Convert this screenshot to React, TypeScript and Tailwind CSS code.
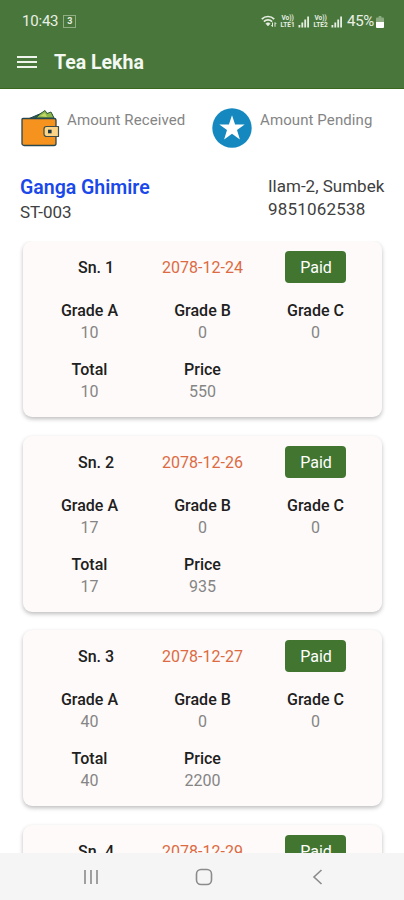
import React from 'react';

interface Entry {
  sn: number;
  date: string;
  gradeA: number;
  gradeB: number;
  gradeC: number;
  total: number;
  price: number;
}

const entries: Entry[] = [
  { sn: 1, date: '2078-12-24', gradeA: 10, gradeB: 0, gradeC: 0, total: 10, price: 550 },
  { sn: 2, date: '2078-12-26', gradeA: 17, gradeB: 0, gradeC: 0, total: 17, price: 935 },
  { sn: 3, date: '2078-12-27', gradeA: 40, gradeB: 0, gradeC: 0, total: 40, price: 2200 },
];

const WifiIcon = () => (
  <svg width="16" height="13" viewBox="0 0 16 13" fill="none" stroke="#e6eee2">
    <path d="M0.800 4.200C4.200.6 9.800.6 13.200 4.200" strokeWidth="1.700" />
    <path d="M2.900 6.600c2.300-2.300 5.900-2.300 8.200 0" strokeWidth="1.700" />
    <path d="M4.800 8.600c1.300-1.200 3.100-1.200 4.400 0L7 11z" fill="#e6eee2" strokeWidth="0.500" />
    <path d="M11.500 7.500v4M10.300 10.300l1.200 1.400M14 11.700v-4M15.200 8.900L14 7.500" strokeWidth="1" />
  </svg>
);

const SignalIcon = () => (
  <svg width="12" height="12" viewBox="0 0 12 12" fill="#e6eee2">
    <rect x="0.500" y="9" width="1.800" height="2.500" />
    <rect x="3.400" y="6.500" width="1.800" height="5" />
    <rect x="6.300" y="3.500" width="1.800" height="8" />
    <rect x="9.200" y="0.500" width="1.800" height="11" />
  </svg>
);

const LteLabel = ({ line }: { line: string }) => (
  <div className="flex w-[15px] flex-col items-center text-[6.5px] leading-[7px] font-bold text-[#e6eee2]">
    <span>Vo))</span>
    <span>{line}</span>
  </div>
);

const WalletIcon = () => (
  <svg width="40" height="40" viewBox="0 0 40 40" strokeLinejoin="round">
    <path d="M8 11l14-6 10 1 2 6-22 2z" fill="#2f5a4c" stroke="#23444a" strokeWidth="1" />
    <path d="M16 10l4-4 5-3.500 2 3 4-1.500 3 6z" fill="#8fb84a" stroke="#2f5a3c" strokeWidth="1" />
    <path d="M20 8l5-3 2 4z" fill="#c5d96a" />
    <path d="M3 10.500h31a2 2 0 0 1 2 2v23a2 2 0 0 1-2 2H4a2 2 0 0 1-2-2v-24a1 1 0 0 1 1-1z" fill="#f6921e" stroke="#28474f" strokeWidth="1.300" />
    <path d="M2.500 10.500h33" stroke="#28474f" strokeWidth="1.200" />
    <path d="M26.500 18.500h12v10h-12a2.500 2.500 0 0 1-2.500-2.500v-5a2.500 2.500 0 0 1 2.500-2.500z" fill="#fbd487" stroke="#3b4c4a" strokeWidth="1.200" />
    <rect x="28" y="21.700" width="3.600" height="3.600" fill="#1d3742" />
  </svg>
);

const StarBadge = () => (
  <svg width="40" height="40" viewBox="0 0 40 40">
    <circle cx="20" cy="20" r="19.700" fill="#1488bf" />
    <path d="M20 7.300l3.100 9.100h9.600l-7.700 5.700 2.900 9.300-7.900-5.600-7.900 5.600 2.900-9.300-7.700-5.700h9.600z" fill="#fff" />
  </svg>
);

const Cell = ({ label, value }: { label: string; value: number }) => (
  <div className="flex flex-col items-center leading-[22px]">
    <span className="font-medium text-[#202020]">{label}</span>
    <span className="text-[#858585]">{value}</span>
  </div>
);

const CardTop = ({ sn, date }: { sn: number; date: string }) => (
  <div className="grid grid-cols-3 items-center justify-items-center text-center">
    <span className="pt-[2px] pl-[13px] font-medium text-[#202020]">Sn. {sn}</span>
    <span className="pt-[2px] text-[#dc6a42]">{date}</span>
    <button className="h-[32px] w-[61px] rounded-[4px] bg-[#427530] pt-[2px] pl-[1px] text-[16px] text-white">Paid</button>
  </div>
);

const cardClass = 'shrink-0 bg-[#fefaf9] px-[10px] pt-[10px] shadow-[0_2px_4px_rgba(0,0,0,0.26)]';

const EntryCard = ({ entry }: { entry: Entry }) => (
  <div className={`${cardClass} h-[176px] rounded-[9px]`}>
    <CardTop sn={entry.sn} date={entry.date} />
    <div className="mt-[17px] grid grid-cols-3 gap-y-[15px]">
      <Cell label="Grade A" value={entry.gradeA} />
      <Cell label="Grade B" value={entry.gradeB} />
      <Cell label="Grade C" value={entry.gradeC} />
      <Cell label="Total" value={entry.total} />
      <Cell label="Price" value={entry.price} />
    </div>
  </div>
);

const App: React.FC = () => {
  return (
    <div className="flex h-[900px] w-[404px] flex-col overflow-hidden bg-white font-['Roboto',sans-serif] text-[16px]">
      <header className="h-[89px] shrink-0 border-b border-[#3a681f] bg-[#49773b]">
        <div className="flex h-[43px] items-center pl-[22px] pr-[20px] text-[15px] text-[#e9f0e5]">
          <span className="tracking-[-0.2px]">10:43</span>
          <span className="ml-[5px] flex h-[13px] w-[13px] items-center justify-center border border-[#8fae84] text-[9px] font-bold">3</span>
          <div className="ml-auto flex items-center">
            <WifiIcon />
            <div className="ml-[3px] flex items-center gap-[3px]">
              <LteLabel line="LTE1" />
              <SignalIcon />
              <LteLabel line="LTE2" />
              <SignalIcon />
            </div>
            <span className="ml-[4px] tracking-[-0.3px]">45%</span>
            <svg className="ml-[2px]" width="8" height="12" viewBox="0 0 9 12" preserveAspectRatio="none">
              <path d="M3 0h3v1.500h2a1 1 0 0 1 1 1V6H0V2.500a1 1 0 0 1 1-1h2z" fill="#8cab80" />
              <path d="M0 6h9v5a1 1 0 0 1-1 1H1a1 1 0 0 1-1-1z" fill="#fff" />
            </svg>
          </div>
        </div>
        <div className="flex h-[38px] items-center pl-[17px]">
          <div className="flex w-[20px] flex-col gap-[3px]">
            <span className="h-[2px] bg-[#eef4eb]" />
            <span className="h-[2px] bg-[#eef4eb]" />
            <span className="h-[2px] bg-[#eef4eb]" />
          </div>
          <h1 className="ml-[17px] pt-[2px] text-[19.5px] font-bold text-[#f4f8f2]">Tea Lekha</h1>
        </div>
      </header>

      <section className="flex h-[60px] shrink-0 pt-[19px] pl-[20px]">
        <div className="flex w-[192px]">
          <WalletIcon />
          <span className="ml-[7px] text-[15px] leading-[24px] tracking-[0.1px] text-[#858585]">Amount Received</span>
        </div>
        <div className="flex">
          <StarBadge />
          <span className="ml-[8px] text-[15px] leading-[24px] tracking-[0.1px] text-[#858585]">Amount Pending</span>
        </div>
      </section>

      <section className="mt-[26px] flex h-[66px] shrink-0 justify-between pl-[20px] pr-[19px]">
        <div>
          <p className="text-[19.5px] leading-[26px] font-semibold text-[#1a48ea]">Ganga Ghimire</p>
          <p className="text-[17px] leading-[23px] text-[#404040]">ST-003</p>
        </div>
        <div className="w-[117px] text-[17px] leading-[23px] whitespace-nowrap text-[#404040]">
          <p>Ilam-2, Sumbek</p>
          <p className="tracking-[0.2px]">9851062538</p>
        </div>
      </section>

      <main className="flex min-h-0 flex-1 flex-col gap-[18.6px] overflow-hidden pr-[22px] pl-[23px]">
        {entries.map((entry) => (
          <EntryCard key={entry.sn} entry={entry} />
        ))}
        <div className={`${cardClass} h-[60px] rounded-t-[9px]`}>
          <CardTop sn={4} date="2078-12-29" />
        </div>
      </main>

      <nav className="z-10 flex h-[47px] shrink-0 items-center bg-[#f5f5f5] text-[#8b8b8b]">
        <svg className="ml-[83px]" width="16" height="16" viewBox="0 0 16 16" fill="none" stroke="currentColor" strokeWidth="1.600">
          <path d="M2 1v14M8 1v14M14 1v14" />
        </svg>
        <svg className="ml-[96px]" width="18" height="18" viewBox="0 0 18 18" fill="none" stroke="currentColor" strokeWidth="1.600">
          <rect x="1.500" y="1.500" width="15" height="15" rx="4.500" />
        </svg>
        <svg className="ml-[98px]" width="14" height="16" viewBox="0 0 14 16" fill="none" stroke="currentColor" strokeWidth="1.600">
          <path d="M10.500 1L3 8l7.500 7" />
        </svg>
      </nav>
    </div>
  );
};

export default App;
